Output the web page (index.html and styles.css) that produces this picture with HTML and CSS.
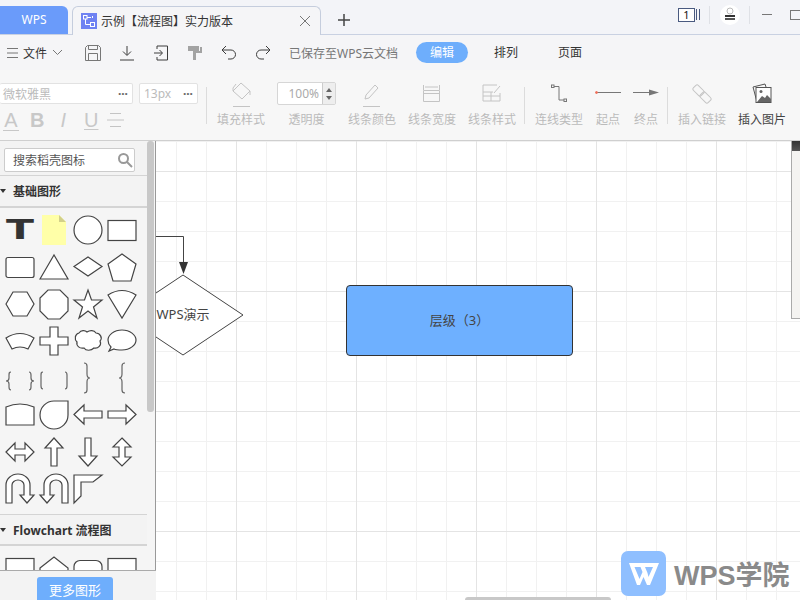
FILE: index.html
```html
<!DOCTYPE html>
<html lang="zh-CN">

<head>
    <meta charset="UTF-8">
    <title>示例【流程图】实力版本</title>
    <link rel="stylesheet" href="styles.css">
</head>

<body>
    <!-- Window tabs -->
    <header class="tabbar">
        <div class="home-tab">WPS</div>
        <div class="doc-tab">
            <svg class="doc-icon" width="16" height="16" viewBox="0 0 16 16">
                <rect width="16" height="16" fill="#6f82f2"/>
                <g fill="none" stroke="#fff" stroke-width="1">
                    <rect x="2.5" y="2.5" width="3.5" height="3.5"/>
                    <rect x="9.5" y="9.5" width="4" height="4"/>
                    <path d="M6 4.5h4M4.5 6v5.5h5M11.5 3v2"/>
                </g>
            </svg>
            <span class="doc-title">示例【流程图】实力版本</span>
            <svg class="doc-close" width="10" height="10" viewBox="0 0 10 10"><path d="M0 0l10 10M10 0L0 10"/></svg>
        </div>
        <svg class="tab-add" width="12" height="12" viewBox="0 0 12 12"><path d="M6 0v12M0 6h12"/></svg>
        <div class="win-tools">
            <div class="page-badge"><span class="page-num">1</span></div>
            <span class="page-lines"></span>
            <span class="win-sep"></span>
            <svg class="avatar" width="20" height="20" viewBox="0 0 20 20">
                <circle cx="10" cy="10" r="10" fill="#fff"/>
                <circle cx="10" cy="6" r="3" fill="none" stroke="#bbb"/>
                <rect x="5" y="10" width="10" height="2" fill="#333"/>
                <rect x="5" y="13" width="10" height="2" fill="#555"/>
            </svg>
            <span class="win-sep"></span>
            <span class="win-min"></span>
            <span class="win-max"></span>
        </div>
    </header>

    <!-- Menu row -->
    <nav class="menubar">
        <div class="file-menu">
            <svg class="ico ico-soft" width="11" height="10" viewBox="0 0 11 10"><path d="M0 .5h11M0 5h11M0 9.500h11"/></svg>
            <span class="file-label">文件</span>
            <svg class="ico ico-soft" width="9" height="5" viewBox="0 0 9 5"><path d="M0 0l4.500 4.500L9 0"/></svg>
        </div>
        <div class="quick-tools">
            <svg class="ico ico-soft" width="16" height="16" viewBox="0 0 16 16"><path d="M2.500.5h11l2 2v13H.5v-13zM3.500.5v4h9v-4M3.500 15.500v-7h9v7"/></svg>
            <svg class="ico" width="16" height="16" viewBox="0 0 16 16"><path d="M8 1v9M4 6.500L8 10.500l4-4M1 15h14"/></svg>
            <svg class="ico" width="16" height="16" viewBox="0 0 16 16"><path d="M4 4V1h10.500v14H4v-3M1 8h8M6.500 5l3 3-3 3"/></svg>
            <svg class="brush" width="16" height="16" viewBox="0 0 16 16"><path d="M1 1h11v5H1zM13 2h2v6H9v7H6V6h7z"/></svg>
            <svg class="ico" width="16" height="16" viewBox="0 0 16 16"><path d="M5 1L1 5l4 4M1 5h9a4.500 4.500 0 0 1 0 9H7"/></svg>
            <svg class="ico" width="16" height="16" viewBox="0 0 16 16"><path d="M11 1l4 4-4 4M15 5H6a4.500 4.500 0 0 0 0 9h3"/></svg>
            <span class="save-state">已保存至WPS云文档</span>
        </div>
        <div class="mode-tabs">
            <span class="mode-tab mode-active">编辑</span>
            <span class="mode-tab">排列</span>
            <span class="mode-tab">页面</span>
        </div>
    </nav>

    <!-- Format toolbar -->
    <section class="toolbar">
        <div class="font-block">
            <div class="font-row">
                <div class="select select-font"><span>微软雅黑</span><b class="dots">···</b></div>
                <div class="select select-size"><span>13px</span><b class="dots">···</b></div>
            </div>
            <div class="style-row">
                <span class="style-a">A</span>
                <span class="style-b">B</span>
                <span class="style-i">I</span>
                <span class="style-u">U</span>
                <svg class="ico-off" width="17" height="14" viewBox="0 0 17 14"><path d="M3 .5h11M0 7h17M3 13.500h11"/></svg>
            </div>
        </div>

        <div class="tool-group">
            <div class="tool">
                <svg class="ico-off" width="20" height="26" viewBox="0 0 20 26"><path d="M10 1l9 8-8 8-9-8zM2 9V6l3-4M19 9v4M2 24.500h17"/></svg>
                <span class="tool-label">填充样式</span>
            </div>
            <div class="tool tool-alpha">
                <div class="alpha-box">
                    <span class="alpha-value">100%</span>
                    <span class="alpha-spin"><i class="spin-up"></i><i class="spin-down"></i></span>
                </div>
                <span class="tool-label">透明度</span>
            </div>
            <div class="tool">
                <svg class="ico-off" width="20" height="26" viewBox="0 0 20 26"><path d="M3 17l1-4L13 3l3 3-9 10zM1 24.500h17"/></svg>
                <span class="tool-label">线条颜色</span>
            </div>
            <div class="tool">
                <svg class="ico-off" width="20" height="26" viewBox="0 0 20 26"><path d="M1.500 8.500h16v11h-16zM1.500 3v5M17.500 3v5M3 5h13M1.500 11.500h16"/></svg>
                <span class="tool-label">线条宽度</span>
            </div>
            <div class="tool">
                <svg class="ico-off" width="20" height="26" viewBox="0 0 20 26"><path d="M18 11v8H1V3h14M1 10h10M1 14h17M9 10v9M12 11l6-7"/></svg>
                <span class="tool-label">线条样式</span>
            </div>
        </div>

        <div class="tool-group">
            <div class="tool">
                <svg class="ico-dark" width="20" height="26" viewBox="0 0 20 26"><path d="M5 4.500h5v13.500h5"/><rect x="2.500" y="3" width="2.500" height="2.500"/><rect x="15" y="17" width="2.500" height="2.500"/></svg>
                <span class="tool-label">连线类型</span>
            </div>
            <div class="tool tool-end">
                <svg class="ico-dark" width="26" height="26" viewBox="0 0 26 26"><path d="M1 10.500h25"/><circle class="dot-start" cx="1.500" cy="10.500" r="1"/></svg>
                <span class="tool-label">起点</span>
            </div>
            <div class="tool tool-end">
                <svg class="ico-dark" width="26" height="26" viewBox="0 0 26 26"><path d="M0 10.500h18"/><path class="arrow-end" d="M16 7.500l10 3-10 3z"/></svg>
                <span class="tool-label">终点</span>
            </div>
        </div>

        <div class="tool-group">
            <div class="tool">
                <svg class="ico-off" width="20" height="26" viewBox="0 0 20 26"><rect x="1" y="5" width="11" height="7" rx="2" transform="rotate(45 6.500 8.500)"/><rect x="8" y="12" width="11" height="7" rx="2" transform="rotate(45 13.500 15.500)"/></svg>
                <span class="tool-label">插入链接</span>
            </div>
            <div class="tool tool-on">
                <svg class="ico-pic" width="20" height="26" viewBox="0 0 20 26">
                    <path d="M1 5l12-3 1 3"/>
                    <path d="M5 20l-4-15"/>
                    <rect x="4" y="5.500" width="15" height="15" fill="#fff"/>
                    <path class="pic-hill" d="M5 20l5-6 3 2 2-3 4 4v3z"/>
                    <circle class="pic-hill" cx="9" cy="9.500" r="1.500"/>
                </svg>
                <span class="tool-label">插入图片</span>
            </div>
        </div>
    </section>

    <main class="workspace">
        <!-- Shape library -->
        <aside class="sidebar">
            <div class="side-body">
                <div class="shape-list">
                    <div class="search-row">
                        <div class="search-box">
                            <span>搜索稻壳图标</span>
                            <svg class="search-icon" width="16" height="16" viewBox="0 0 16 16"><circle cx="6.500" cy="6.500" r="4.500"/><path d="M10 10l5 5"/></svg>
                        </div>
                    </div>

                    <h2 class="shape-head">基础图形</h2>
                    <div class="shapes">
                        <svg viewBox="0 0 34 37"><text class="shape-t" x="3" y="28" textLength="28" lengthAdjust="spacingAndGlyphs">T</text></svg>
                        <svg viewBox="0 0 34 37"><path class="note" d="M5 4h17l7 7v23H5z"/><path class="note-fold" d="M22 4l7 7h-7z"/></svg>
                        <svg viewBox="0 0 34 37"><circle cx="17" cy="19" r="14"/></svg>
                        <svg viewBox="0 0 34 37"><rect x="3" y="9.500" width="28" height="20"/></svg>

                        <svg viewBox="0 0 34 37"><rect x="3" y="9.500" width="28" height="20" rx="2"/></svg>
                        <svg viewBox="0 0 34 37"><path d="M3 31L17 7l14 24z"/></svg>
                        <svg viewBox="0 0 34 37"><path d="M3 18.500L17 9l14 9.500L17 28z"/></svg>
                        <svg viewBox="0 0 34 37"><path d="M17 6l14 10-5 17H8L3 16z"/></svg>

                        <svg viewBox="0 0 34 37"><path d="M3 19l7-12h14l7 12-7 12H10z"/></svg>
                        <svg viewBox="0 0 34 37"><path d="M11 5h12l8 8v13l-8 8H11l-8-8V13z"/></svg>
                        <svg viewBox="0 0 34 37"><path d="M17 5l3.500 10H31l-8.500 7L26 33l-9-7-9 7 3.500-11L3 15h10.500z"/></svg>
                        <svg viewBox="0 0 34 37"><path d="M3 10Q17 1 31 10L17 33z"/></svg>

                        <svg viewBox="0 0 34 37"><path d="M3 16Q17 7 31 16l-6 11Q17 23 9 27z"/></svg>
                        <svg viewBox="0 0 34 37"><path d="M13 5h8v10h10v8H21v10h-8V23H3v-8h10z"/></svg>
                        <svg viewBox="0 0 34 37"><path d="M8 11c2-3 6-3 8-1 3-2 7-2 9 1 4 0 7 5 4 8 2 4-2 8-6 7-3 3-8 3-10 0-4 1-8-2-7-6-3-3-2-8 2-9z"/></svg>
                        <svg viewBox="0 0 34 37"><path d="M17 8c8 0 14 5 14 10s-6 10-14 10c-3 0-6 0-8-1l-5 2 2-4c-2-2-3-4-3-7 0-5 6-10 14-10z"/></svg>

                        <svg class="open" viewBox="0 0 34 37"><path d="M8 13c-2 0-2 1-2 3v3c0 2-1 3-3 3 2 0 3 1 3 3v3c0 2 0 3 2 3"/><path d="M26 13c2 0 2 1 2 3v3c0 2 1 3 3 3-2 0-3 1-3 3v3c0 2 0 3-2 3"/></svg>
                        <svg class="open" viewBox="0 0 34 37"><path d="M6 13c-2 0-2 1-2 3v11c0 2 0 3 2 3"/><path d="M28 13c2 0 2 1 2 3v11c0 2 0 3-2 3"/></svg>
                        <svg class="open" viewBox="0 0 34 37"><path d="M13 4c2 0 3 1 3 3v8c0 3 1 4 3 4-2 0-3 1-3 4v8c0 2-1 3-3 3"/></svg>
                        <svg class="open" viewBox="0 0 34 37"><path d="M20 4c-2 0-3 1-3 3v8c0 3-1 4-3 4 2 0 3 1 3 4v8c0 2 1 3 3 3"/></svg>

                        <svg viewBox="0 0 34 37"><path d="M3 29V11Q17 5 31 11v18z"/></svg>
                        <svg viewBox="0 0 34 37"><path d="M17 5h14v14A14 14 0 1 1 17 5z"/></svg>
                        <svg viewBox="0 0 34 37"><path d="M3 18.500L13 9v6h18v7H13v6z"/></svg>
                        <svg viewBox="0 0 34 37"><path d="M31 18.500L21 9v6H3v7h18v6z"/></svg>

                        <svg viewBox="0 0 34 37"><path d="M3 19l9-9v6h10v-6l9 9-9 9v-6H12v6z"/></svg>
                        <svg viewBox="0 0 34 37"><path d="M17 5l9 10h-6v18h-6V15H8z"/></svg>
                        <svg viewBox="0 0 34 37"><path d="M17 33l9-10h-6V5h-6v18H8z"/></svg>
                        <svg viewBox="0 0 34 37"><path d="M17 5l9 9h-6v10h6l-9 9-9-9h6V14H8z"/></svg>

                        <svg viewBox="0 0 34 37"><path d="M3 33V15A12 11 0 0 1 27 15V25H31L24 33L17 25H21V15A6 5 0 0 0 9 15V33Z"/></svg>
                        <svg viewBox="0 0 34 37"><path transform="matrix(-1 0 0 1 34 0)" d="M3 33V15A12 11 0 0 1 27 15V25H31L24 33L17 25H21V15A6 5 0 0 0 9 15V33Z"/></svg>
                        <svg viewBox="0 0 34 37"><path d="M3 33V5h28l-9 7H10v14z"/></svg>
                    </div>

                    <h2 class="shape-head shape-head-flow">Flowchart 流程图</h2>
                    <div class="shapes">
                        <svg viewBox="0 0 34 37"><rect x="3" y="9.500" width="28" height="20"/></svg>
                        <svg viewBox="0 0 34 37"><path d="M3 19L17 8l14 11v11H3z"/></svg>
                        <svg viewBox="0 0 34 37"><rect x="3" y="11.500" width="28" height="20" rx="6"/></svg>
                        <svg viewBox="0 0 34 37"><rect x="3" y="9.500" width="28" height="20"/></svg>
                    </div>
                </div>
                <div class="side-scroll"><div class="side-thumb"></div></div>
            </div>
            <div class="side-foot"><button class="more-btn">更多图形</button></div>
        </aside>

        <!-- Drawing canvas -->
        <div class="canvas">
            <svg class="links" width="644" height="459" viewBox="0 0 644 459">
                <path class="link-line" d="M0 95.500h27.500V122"/>
                <path class="link-head" d="M23 121h9l-4.500 12z"/>
                <path class="node-shape" d="M27 134l60 40-60 40-60-40z"/>
                <text class="node-text" x="27" y="178">WPS演示</text>
            </svg>
            <div class="node-box">层级（3）</div>
            <div class="side-panel"><div class="panel-head"></div></div>
            <div class="hscroll"></div>
            <div class="watermark">
                <svg width="45" height="45" viewBox="0 0 45 45">
                    <rect width="45" height="45" rx="7" fill="#8fbfff"/>
                    <path fill="#fff" d="M8 12h30l-9 22h-3l-3.500-8-3.500 8h-3z"/>
                    <path fill="#8fbfff" d="M13.500 16l5 12 3-7-2-5zM24 16l2.500 6 1 4 4.500-10z"/>
                </svg>
                <span class="mark-text">WPS学院</span>
            </div>
        </div>
    </main>
</body>

</html>
```

FILE: styles.css
```css
/* General styles */
* {
    box-sizing: border-box;
}

html, body {
    height: 100%;
}

body {
    margin: 0;
    width: 800px;
    height: 600px;
    overflow: hidden;
    display: flex;
    flex-direction: column;
    font-family: "Noto Sans", "Noto Sans CJK SC", sans-serif;
    font-size: 12px;
    color: #333;
    background: #f7f7f7;
}

svg {
    display: block;
    flex: none;
}

/* Tab bar */
.tabbar {
    height: 35px;
    flex: none;
    display: flex;
    align-items: flex-end;
    background: #f3f4f8;
    border-bottom: 1px solid #c9d1e2;
}

.home-tab {
    width: 68px;
    height: 28px;
    margin-right: 4px;
    background: #6a9bfa;
    border-radius: 0 6px 0 0;
    color: #fff;
    text-align: center;
    line-height: 28px;
}

.doc-tab {
    width: 249px;
    height: 29px;
    margin-bottom: -1px;
    display: flex;
    align-items: center;
    padding: 0 10px 0 8px;
    background: #f5f5f7;
    border: 1px solid #c5cddd;
    border-bottom: none;
    border-radius: 6px 6px 0 0;
}

.doc-title {
    margin-left: 4px;
    flex: 1;
    color: #333;
    white-space: nowrap;
}

.doc-close {
    stroke: #777;
}

.tab-add {
    margin: 0 0 8px 17px;
    stroke: #444;
    stroke-width: 1.500;
}

.win-tools {
    margin-left: auto;
    margin-right: -2px;
    align-self: stretch;
    display: flex;
    align-items: center;
    padding-bottom: 5px;
}

.page-badge {
    width: 17px;
    height: 14px;
    border: 1px solid #4a5a80;
    text-align: center;
    line-height: 12px;
    font-size: 11px;
    color: #111;
    background: #fff;
}

.page-lines {
    width: 4px;
    height: 11px;
    margin-left: 1px;
    border-left: 1px solid #4a5a80;
    border-right: 1px solid #4a5a80;
}

.win-sep {
    width: 1px;
    height: 18px;
    margin: 0 10px 0 9px;
    background: #dfe1e6;
}

.win-min {
    width: 10px;
    height: 1px;
    margin: 0 18px 0 2px;
    background: #777;
}

.win-max {
    width: 12px;
    height: 10px;
    border: 1px solid #777;
}

/* Menu row */
.menubar {
    height: 35px;
    flex: none;
    display: flex;
    align-items: center;
    padding-left: 7px;
    background: #f5f5f7;
}

.ico, .ico-off, .ico-dark, .ico-pic {
    fill: none;
}

.ico {
    stroke: #3c3c3c;
}

.ico-soft {
    stroke: #777;
}

.brush {
    fill: #a3a3a3;
}

.file-menu {
    display: flex;
    align-items: center;
    width: 78px;
}

.file-label {
    margin: 0 6px 0 5px;
    color: #333;
}

.quick-tools {
    display: flex;
    align-items: center;
    gap: 18px;
    width: 331px;
}

.save-state {
    color: #777;
    white-space: nowrap;
}

.mode-tabs {
    display: flex;
    gap: 12px;
}

.mode-tab {
    width: 52px;
    height: 21px;
    line-height: 21px;
    text-align: center;
    border-radius: 11px;
    color: #333;
}

.mode-active {
    background: #6eaefc;
    color: #fff;
}

/* Format toolbar */
.toolbar {
    height: 71px;
    flex: none;
    display: flex;
    white-space: nowrap;
    background: #f7f7f7;
    border-bottom: 1px solid #cfcfcf;
}

.font-block {
    width: 198px;
    flex: none;
    padding-top: 13px;
}

.font-row {
    display: flex;
    gap: 6px;
}

.select {
    height: 21px;
    display: flex;
    align-items: center;
    justify-content: space-between;
    padding: 0 4px;
    background: #fff;
    border: 1px solid #e2e2e2;
    border-radius: 2px;
    color: #bbb;
}

.select-font {
    width: 133px;
    border-left: none;
    padding-left: 3px;
}

.select-size {
    width: 59px;
}

.dots {
    color: #666;
    font-size: 12px;
    line-height: 10px;
}

.style-row {
    display: flex;
    align-items: center;
    height: 32px;
    font-family: "Liberation Sans", sans-serif;
    font-size: 20px;
    color: #c8c8c8;
}

.style-a {
    width: 16px;
    margin-left: 3px;
    text-align: center;
    line-height: 20px;
    border-bottom: 1px solid #c8c8c8;
}

.style-b {
    margin-left: 11px;
    font-weight: bold;
}

.style-i {
    margin-left: 16px;
    font-style: italic;
}

.style-u {
    margin-left: 18px;
    text-decoration: underline;
    text-decoration-thickness: 1px;
    text-underline-offset: 2px;
}

.style-row svg {
    margin-left: 9px;
}

.tool-group {
    flex: none;
    display: flex;
    gap: 12px;
    margin: 17px 0 16px 8px;
    padding-left: 10px;
    border-left: 1px solid #dcdcdc;
}

.tool {
    width: 48px;
    height: 44px;
    margin-top: -5px;
    display: flex;
    flex-direction: column;
    align-items: center;
}

.tool svg, .alpha-box {
    height: 26px;
    flex: none;
}

.tool-end {
    width: 26px;
}

.tool-alpha {
    width: 59px;
}

.tool-label {
    margin-top: 3px;
    line-height: 18px;
    color: #bbb;
}

.tool-on .tool-label {
    color: #444;
}

.ico-off {
    stroke: #c4c4c4;
}

.ico-dark {
    stroke: #777;
}

.dot-start {
    fill: #f0705a;
    stroke: #f0705a;
}

.arrow-end {
    fill: #777;
    stroke: none;
}

.ico-pic {
    stroke: #555;
}

.pic-hill {
    fill: #666;
    stroke: none;
}

.alpha-box {
    width: 59px;
    height: 23px;
    margin-bottom: 3px;
    display: flex;
    background: #fff;
    border: 1px solid #d6d6d6;
    border-radius: 2px;
}

.alpha-value {
    flex: 1;
    text-align: right;
    padding-right: 3px;
    line-height: 21px;
    color: #aaa;
}

.alpha-spin {
    width: 13px;
    display: flex;
    flex-direction: column;
    align-items: center;
    justify-content: center;
    gap: 4px;
    background: #eee;
    border-left: 1px solid #ccc;
}

.spin-up, .spin-down {
    width: 0;
    height: 0;
    border-left: 3px solid transparent;
    border-right: 3px solid transparent;
}

.spin-up {
    border-bottom: 4px solid #666;
}

.spin-down {
    border-top: 4px solid #666;
}

/* Workspace */
.workspace {
    flex: 1;
    min-height: 0;
    display: flex;
}

/* Shape library */
.sidebar {
    width: 156px;
    flex: none;
    display: flex;
    flex-direction: column;
    background: #f5f5f5;
}

.side-body {
    flex: 1;
    min-height: 0;
    display: flex;
    overflow: hidden;
    border-right: 1px solid #999;
}

.shape-list {
    width: 147px;
    flex: none;
}

.search-row {
    height: 35px;
    padding: 7px 0 0 4px;
    background: #f3f3f3;
    border-bottom: 1px solid #d4d4d4;
}

.search-box {
    width: 131px;
    height: 24px;
    display: flex;
    align-items: center;
    justify-content: space-between;
    padding: 0 1px 0 8px;
    background: #fff;
    border: 1px solid #ccc;
    border-radius: 2px;
    color: #555;
}

.search-icon {
    fill: none;
    stroke: #999;
    stroke-width: 2;
}

.shape-head {
    height: 32px;
    margin: 0;
    display: flex;
    align-items: center;
    gap: 7px;
    font-size: 12px;
    font-weight: bold;
    color: #333;
    background: #f3f3f3;
    border-bottom: 2px solid #d4d4d4;
}

.shape-head::before {
    content: "";
    border-left: 3.500px solid transparent;
    border-right: 3.500px solid transparent;
    border-top: 4px solid #333;
}

.shape-head-flow {
    margin-top: 7px;
    border-top: 1px solid #d4d4d4;
}

.shapes {
    padding: 3px 0 0 3px;
    display: grid;
    grid-template-columns: repeat(4, 34px);
    grid-auto-rows: 37px;
}

.shapes svg {
    width: 34px;
    height: 37px;
    overflow: visible;
    fill: #fff;
    stroke: #444;
    stroke-width: 1.200;
}

.shapes svg.open {
    fill: none;
    stroke: #666;
}

.shapes .shape-t {
    fill: #333;
    stroke: none;
    font-family: "DejaVu Sans", sans-serif;
    font-weight: bold;
    font-size: 27px;
}

.shapes .note {
    fill: #ffffa8;
    stroke: none;
}

.shapes .note-fold {
    fill: #d2d08a;
    stroke: none;
}

.side-scroll {
    width: 8px;
    flex: none;
}

.side-thumb {
    width: 7px;
    height: 271px;
    background: #c8c8c8;
    border-radius: 3px;
}

.side-foot {
    height: 30px;
    flex: none;
    width: 157px;
    padding-top: 6px;
    padding-left: 37px;
    background: #f3f3f3;
    border-top: 1px solid #aaa;
    border-right: 1px solid #aaa;
}

.more-btn {
    width: 76px;
    height: 24px;
    display: block;
    padding: 0;
    font: inherit;
    font-size: 13px;
    color: #fff;
    background: #6eaefc;
    border: none;
    border-radius: 3px 3px 0 0;
}

/* Canvas */
.canvas {
    flex: 1;
    position: relative;
    overflow: hidden;
    background-color: #fff;
    background-image:
        linear-gradient(to right, #e4e4e4 1px, transparent 1px),
        linear-gradient(to bottom, #e4e4e4 1px, transparent 1px),
        linear-gradient(to right, #f1f1f1 1px, transparent 1px),
        linear-gradient(to bottom, #f1f1f1 1px, transparent 1px);
    background-size: 120px 120px, 120px 120px, 30px 30px, 30px 30px;
    background-position: 80px 0, 0 30px, 20px 0, 0 0;
}

.links {
    position: absolute;
    left: 0;
    top: 0;
}

.link-line {
    fill: none;
    stroke: #444;
}

.link-head {
    fill: #333;
}

.node-shape {
    fill: #fff;
    stroke: #444;
}

.node-text {
    font-size: 13px;
    fill: #444;
    text-anchor: middle;
}

.node-box {
    position: absolute;
    left: 190px;
    top: 144px;
    width: 227px;
    height: 71px;
    padding-bottom: 2px;
    display: flex;
    align-items: center;
    justify-content: center;
    font-size: 13px;
    color: #444;
    background: #6eb0ff;
    border: 1px solid #333;
    border-radius: 4px;
}

.side-panel {
    position: absolute;
    right: 0;
    top: 0;
    width: 9px;
    height: 178px;
    background: #f4f3f1;
    border-left: 1px solid #aaa;
    border-bottom: 1px solid #aaa;
}

.panel-head {
    height: 10px;
    background: linear-gradient(#333, #555);
}

.hscroll {
    position: absolute;
    left: 309px;
    bottom: 0;
    width: 146px;
    height: 3px;
    background: #c8c8c8;
    border-radius: 3px 3px 0 0;
}

.watermark {
    position: absolute;
    left: 465px;
    top: 410px;
    display: flex;
    align-items: center;
    gap: 8px;
}

.mark-text {
    font-family: "Liberation Sans", "Noto Sans CJK SC", sans-serif;
    font-size: 27px;
    font-weight: bold;
    color: #8a8a8a;
    white-space: nowrap;
}
```
